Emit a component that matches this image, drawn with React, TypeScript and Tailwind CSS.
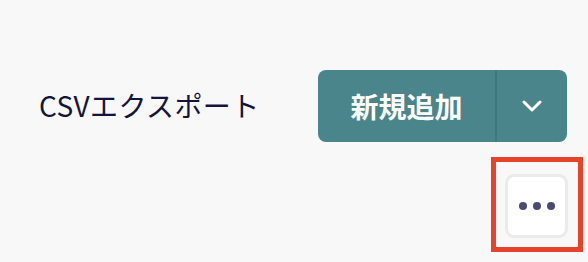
export default function App() {
  return (
    <div
      className="w-[588px] h-[262px] bg-[#f8f8f8] text-[#14143c]"
      style={{ fontFamily: '"Noto Sans CJK JP", "Noto Sans", sans-serif' }}
    >
      <div className="flex items-center justify-between pl-[39px] pr-[21px] pt-[70px]">
        <span className="text-[28px] leading-none tracking-[0.4px] -mt-[2px]">CSVエクスポート</span>
        <div className="flex h-[72px] rounded-[8px] bg-[#4a858b] text-white overflow-hidden">
          <button className="w-[177px] flex items-center justify-center text-[28px] font-bold">
            新規追加
          </button>
          <div className="w-[2px] bg-[#3e777d]" />
          <button className="w-[70px] flex items-center justify-center">
            <svg width="20" height="12" viewBox="0 0 20 12" fill="none">
              <path d="M2 2 L10 10 L18 2" stroke="white" strokeWidth="3" strokeLinecap="round" strokeLinejoin="round" />
            </svg>
          </button>
        </div>
      </div>
      <div className="flex justify-end pr-[20px] pt-[32px]">
        <div className="relative">
          <button className="w-[63px] h-[64px] flex items-center justify-center gap-[6px] rounded-[9px] border-[3px] border-[#ebebeb] bg-white">
            <span className="w-[8px] h-[8px] rounded-full bg-[#4b4a72]" />
            <span className="w-[8px] h-[8px] rounded-full bg-[#4b4a72]" />
            <span className="w-[8px] h-[8px] rounded-full bg-[#4b4a72]" />
          </button>
          <span className="absolute -left-[14px] -top-[17px] -right-[15px] -bottom-[14px] border-[5px] border-[#e8432a] pointer-events-none" />
        </div>
      </div>
    </div>
  );
}
